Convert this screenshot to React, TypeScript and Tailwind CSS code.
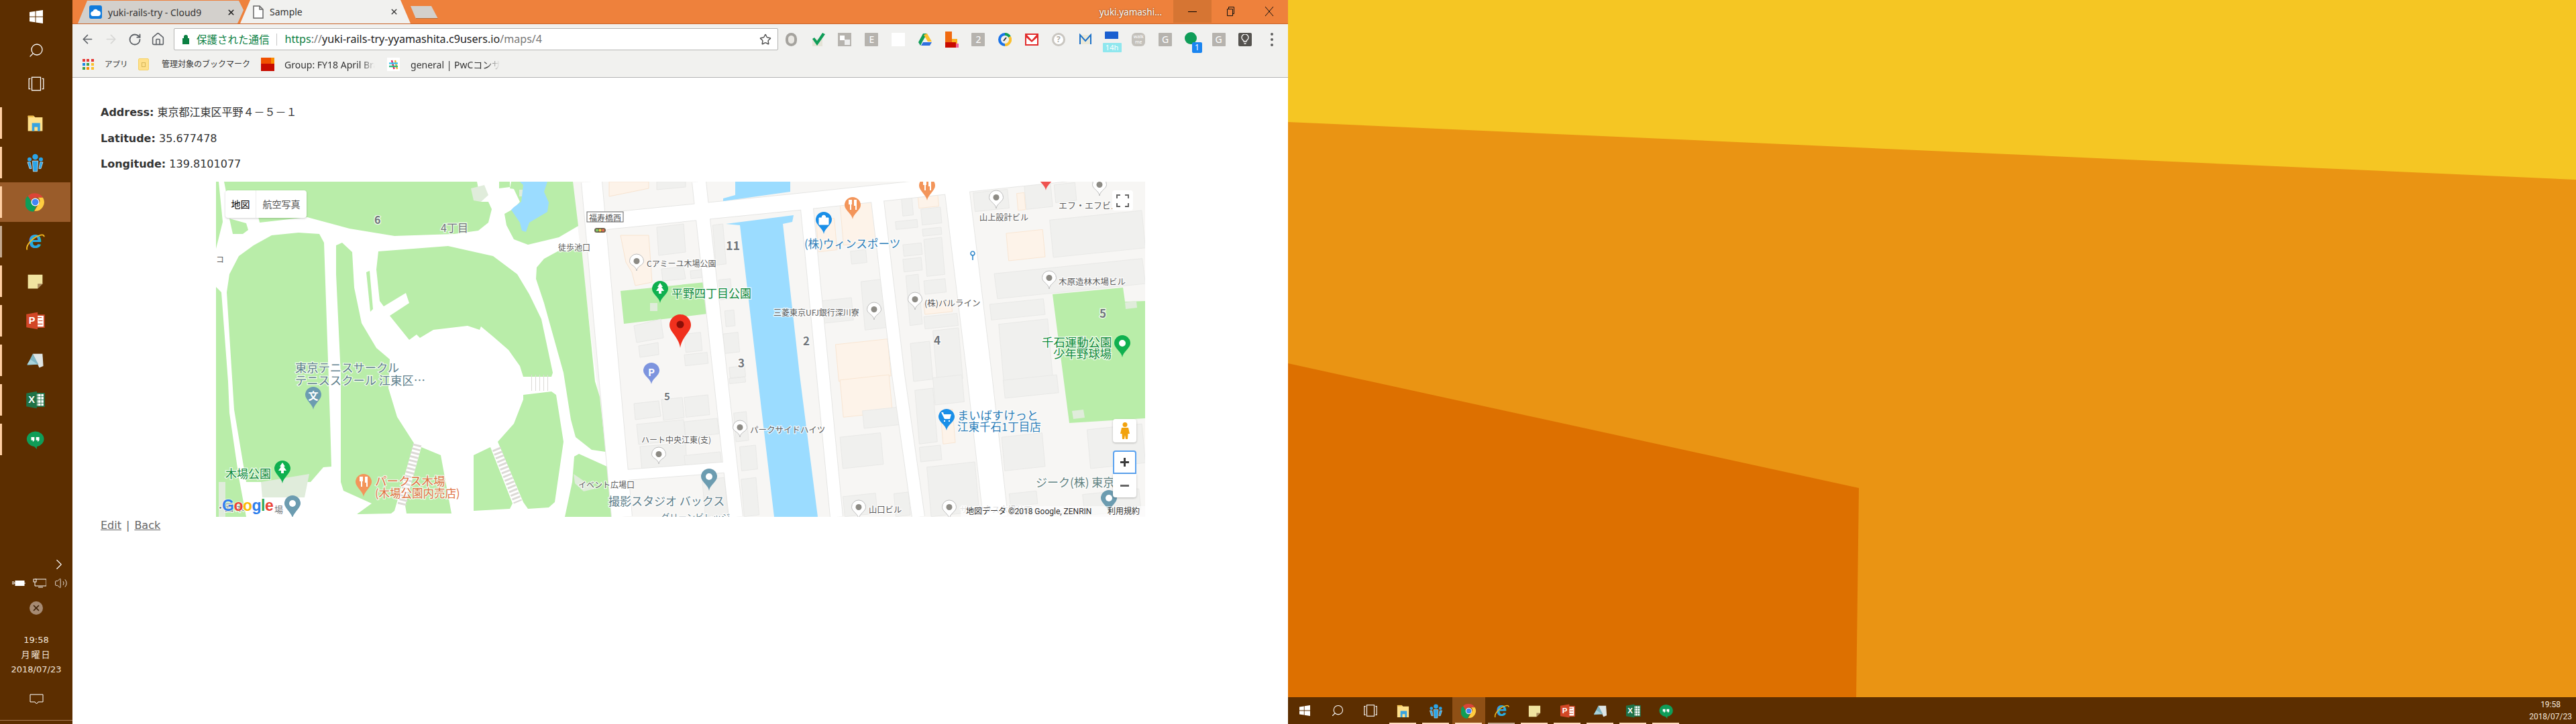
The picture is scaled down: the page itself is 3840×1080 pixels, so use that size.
import React from 'react';
import { ArrowLeft, ArrowRight, RotateCw, House, Star, X, Search, ChevronRight, Volume2 } from 'lucide-react';

// zoomed crop coordinates -> map coordinates
const zx = (x: number) => x / 2.24 + 698;
const zTop = (y: number) => y / 3 - 2;
const zBot = (y: number) => y / 3 + 288;

const GREEN = '#b9eda9';
const greens = [
  '5,0 389,0 395,30 406,30 411,41 406,61 391,73 355,78 266,81 199,70 136,53 65,61 62,48 20,40 12,0',
  '20,55 45,62 48,72 40,78 25,78',
  '0,0 4,0 10,60 0,100',
  '16,165 20,138 34,111 56,95 83,80 123,76 154,78 161,91 170,355 172,425 160,426 141,448 45,448 27,340',
  '0,157 8,165 18,298 20,345 34,441 45,500 0,500',
  '179,95 188,91 203,105 206,158 217,211 239,248 259,265 257,308 270,351 295,390 266,491 261,495 210,496 232,480 190,461 186,448 186,288 179,138',
  '242,104 346,96 413,111 449,138 467,168 485,205 502,285 500,291 458,291 453,275 436,251 413,231 395,216 393,221 375,215 324,221 304,233 299,228 288,236 259,200 288,181 283,166 250,186 244,178 239,131',
  '422,0 438,0 438,8 422,10',
  '440,0 532,0 540,66 511,83 465,94 444,86 433,65 430,48 444,40 453,30 444,11 438,10',
  '477,145 478,128 489,115 511,103 545,100 565,298 572,321 581,403 560,400 536,381 529,355 518,285 489,181',
  '458,318 500,313 507,318 518,388 505,478 496,486 465,488 458,478 420,388 444,361 458,325',
  '384,408 409,396 442,480 438,488 384,491',
  '306,396 335,408 351,495 284,495 282,483',
  '534,410 541,406 583,425 596,438 592,500 520,500 531,448',
  '224,135 229,133 234,190 230,194',
  '603,163 729,150 733,197 608,212',
  '1247,168 1352,158 1355,179 1385,178 1385,353 1272,360',
];
const paleGreen = ['67,448 139,436 132,471 69,471', '533,436 565,458 548,462 535,450', '647,181 658,181 658,193 647,193', '1355,180 1372,178 1373,188 1356,190', '1276,342 1293,340 1295,352 1278,354', '380,10 400,5 406,20 395,30 384,28', '452,12 462,12 462,22 452,22', '4,448 14,448 14,500 4,500'];
const water = ['453,0 494,0 489,15 496,31 494,45 467,61 462,75 456,73 453,61 440,42 444,38 455,30 458,5', '774,0 856,0 856,15 756,29 756,25 774,20', '760,63 861,50 859,60 845,63 870,288 897,500 832,500 807,288 781,65'];
const peach = ['586,0 645,0 645,10 586,22', '603,80 645,80 650,150 625,155 620,135 611,120'];

// building footprints, top half crop / bottom half crop
const blocksTop = [[965,40,1085,140],[1135,5,1230,130],[1235,10,1310,100],[1220,135,1540,345],[1035,350,1540,530],[1020,530,1205,625],[1050,620,1230,900],[725,75,765,160],[705,175,780,220],[790,120,860,200],[795,210,860,250],[730,280,795,340],[730,345,795,410],[800,255,870,430],[740,420,795,650],[800,440,875,510],[800,595,915,665],[755,720,830,900],[830,660,930,900],[455,525,565,640],[590,440,690,670],[555,310,610,375],[95,195,140,380],[115,440,160,535],[135,580,170,655],[130,680,185,775],[150,830,205,885],[20,400,60,440],[0,680,60,770],[0,770,80,830]];
const blocksBot = [[1065,0,1250,105],[1060,260,1205,430],[1345,220,1540,420],[1085,520,1180,590],[1330,510,1525,630],[770,60,845,310],[830,0,935,135],[785,315,860,390],[810,390,985,635],[595,145,720,240],[520,260,665,420],[530,530,645,635],[700,525,755,635],[150,10,205,40],[165,165,215,300],[185,315,245,430],[190,460,250,635],[0,90,85,190],[0,195,115,280],[0,345,125,420],[60,460,145,635]];
const blocksLeft = ['623,215 663,205 667,233 627,240', '630,245 659,240 660,258 632,262', '623,331 660,327 663,350 625,355', '664,325 695,322 698,352 667,356', '627,362 697,355 700,385 630,392', '657,0 700,0 700,8 657,12', '657,68 697,63 700,105 660,110', '664,130 697,127 700,145 666,148', '632,395 700,390 702,425 635,432'];
const peachBlocks = [[440,170,510,320,0],[520,90,640,290,0],[505,710,690,900,0],[780,60,850,125,0],[800,540,895,600,0],[1075,220,1205,360,0],[1110,55,1140,135,0],[520,0,695,190,1],[855,155,905,310,1]];

const roads: [string, number][] = [
  ['560,0 605,500', 30], ['578,60 590,58 868,30 1100,5 1385,-25', 24], ['720,0 727,65 775,500', 20], ['880,30 925,500', 18], ['985,20 1017,288 1047,500', 18], ['1104,8 1138,288 1162,500', 36], ['605,438 760,426', 15],
];

const labels: [string, number, number, number, string, number?][] = [
  ['6', 236, 56, 16, '#70757a', 700], ['4丁目', 335, 68, 16, '#70757a'], ['徒歩池口', 510, 97, 12, '#5b5b5b'], ['コ', 0, 115, 12, '#5b5b5b'],
  ['Cアミーユ木場公園', 642, 121, 12, '#5b5b5b'], ['平野四丁目公園', 679, 165, 17, '#0f8a3c'],
  ['東京テニスサークル', 118, 276, 17.3, '#5f7f8c'], ['テニススクール 江東区…', 118, 295, 17.3, '#5f7f8c'],
  ['木場公園', 14, 434, 17, '#0f8a3c'], ['パークス木場', 237, 445, 17.5, '#e0703f'], ['(木場公園内売店)', 237, 464, 16.5, '#e0703f'],
  ['イベント広場口', 540, 451, 12, '#5b5b5b'], ['撮影スタジオ バックス', 585, 475, 17, '#5f7f8c'], ['グリーンビレッジ', 663, 499, 13, '#5f7f8c'],
  ['ハート中央江東(支)', 634, 384, 12, '#5b5b5b'], ['5', 668, 319, 15, '#70757a', 700], ['11', 760, 94, 18, '#70757a', 700], ['2', 875, 236, 17, '#70757a', 700], ['3', 778, 269, 17, '#70757a', 700], ['4', 1070, 235, 17, '#70757a', 700], ['5', 1317, 195, 17, '#70757a', 700],
  ['(株)ウィンスポーツ', 877, 92, 16.6, '#2b7db8'], ['エフ・エフビル', 1256, 34, 13, '#5b5b5b'], ['山上設計ビル', 1138, 53, 12.2, '#5b5b5b'], ['木原造林木場ビル', 1256, 148, 12.5, '#5b5b5b'], ['(株)バルライン', 1056, 180, 12.5, '#5b5b5b'], ['三菱東京UFJ銀行深川寮', 831, 194, 12, '#5b5b5b'],
  ['千石運動公園', 1231, 238, 17.4, '#0f8a3c'], ['少年野球場', 1248, 255, 17.4, '#0f8a3c'], ['まいばすけっと', 1105, 347, 17.3, '#2b7db8'], ['江東千石1丁目店', 1105, 365, 16.5, '#2b7db8'],
  ['パークサイドハイツ', 796, 369, 12.5, '#5b5b5b'], ['山口ビル', 973, 489, 12.3, '#5b5b5b'], ['サンクタス木場公園', 1109, 488, 12, '#b5b5b5'], ['ジーク(株) 東京', 1222, 447, 17, '#5f8080'], ['場', 87, 488, 13, '#70757a'], ['・園 木', 0, 485, 13, '#70757a'],
];

type Glyph = 'dot' | 'tree' | 'fork' | 'bag' | 'cart' | 'P' | 'bun';
const pins: [number, number, number, number, string, Glyph][] = [
  [627, 108, 133, 21, 'gray', 'dot'], [662, 148, 181, 24, '#0fb04f', 'tree'], [649, 270, 302, 24, '#7d94de', 'P'], [660, 396, 421, 21, 'gray', 'dot'],
  [145, 306, 340, 24, '#6c9cb0', 'bun'], [99, 416, 450, 24, '#0fb04f', 'tree'], [114, 468, 502, 24, '#6c9cb0', 'dot'], [220, 436, 470, 24, '#f3955a', 'fork'],
  [735, 428, 461, 24, '#6c9cb0', 'dot'], [906, 45, 78, 24, '#1a8fe8', 'bag'], [949, 23, 56, 24, '#f3955a', 'fork'], [1060, -6, 28, 24, '#f3955a', 'fork'],
  [1163, 13, 40, 21, 'gray', 'dot'], [1237, -20, 13, 24, '#ef5350', 'dot'], [1317, -6, 21, 21, 'gray', 'dot'], [1242, 133, 160, 21, 'gray', 'dot'], [1042, 165, 191, 21, 'gray', 'dot'], [981, 180, 206, 21, 'gray', 'dot'],
  [1351, 229, 262, 24, '#0fb04f', 'dot'], [1089, 339, 371, 24, '#1a8fe8', 'cart'], [781, 356, 381, 21, 'gray', 'dot'], [958, 475, 503, 21, 'gray', 'dot'], [1093, 475, 503, 21, 'gray', 'dot'], [1331, 460, 493, 24, '#6c9cb0', 'dot'],
];

function Pin({ x, top, tip, w, color, glyph }: { x: number; top: number; tip: number; w: number; color: string; glyph: Glyph }) {
  const cy = top + w / 2;
  const gray = color === 'gray';
  const d = `M${x} ${tip}C${x - 1} ${tip - 8} ${x - w / 2} ${cy + w * 0.3} ${x - w / 2} ${cy}A${w / 2} ${w / 2} 0 1 1 ${x + w / 2} ${cy}C${x + w / 2} ${cy + w * 0.3} ${x + 1} ${tip - 8} ${x} ${tip}Z`;
  return (
    <g>
      <path d={d} fill={gray ? '#fff' : color} stroke={gray ? '#bdbdbd' : 'none'} strokeWidth="1" />
      {glyph === 'dot' && <circle cx={x} cy={cy} r={gray ? 4.5 : 5} fill={gray ? '#8d8b85' : '#fff'} />}
      {glyph === 'tree' && <path d={`M${x} ${cy - 9}l4 6h-2l4 6h-4v4h-4v-4h-4l4-6h-2z`} fill="#fff" />}
      {glyph === 'fork' && <path d={`M${x - 6} ${cy - 8}v7h2v8h2v-8h1v-7M${x + 2} ${cy - 8}h4v15h-2v-6h-2z`} fill="#fff" />}
      {glyph === 'bag' && <path d={`M${x - 7} ${cy - 3}h14v10h-14zM${x - 3} ${cy - 3}a3 4 0 0 1 6 0`} fill="#fff" stroke="#fff" />}
      {glyph === 'cart' && <path d={`M${x - 8} ${cy - 7}h3l1 3h11l-2 7h-8zM${x - 4} ${cy + 5}h2v2h-2zM${x + 3} ${cy + 5}h2v2h-2z`} fill="#fff" />}
      {glyph === 'P' && <text x={x} y={cy + 1} textAnchor="middle" dominantBaseline="central" fontSize="15" fontWeight="700" fill="#fff">P</text>}
      {glyph === 'bun' && <text x={x} y={cy} textAnchor="middle" dominantBaseline="central" fontSize="15" fontWeight="700" fill="#fff">文</text>}
    </g>
  );
}

function MapCanvas() {
  const bld = (x0: number, y0: number, x1: number, y1: number) => {
    const w = x1 - x0, h = y1 - y0;
    return `${x0},${y0 + 0.1 * w} ${x1 - 0.08 * h},${y0} ${x1},${y1 - 0.1 * w} ${x0 + 0.08 * h},${y1}`;
  };
  return (
    <svg viewBox="0 0 1385 500" className="block w-[1385px] h-[500px] font-['Noto_Sans_CJK_JP',sans-serif]">
      <rect width="1385" height="500" fill="#f7f6f4" />
      <polygon points="0,0 531,0 592,500 0,500" fill="#ffffff" />
      {greens.map((p) => <polygon key={p} points={p} fill={GREEN} />)}
      {paleGreen.map((p) => <polygon key={p} points={p} fill="#e0ecdb" />)}
      {peach.map((p) => <polygon key={p} points={p} fill="#fdf3e9" stroke="#f8e4d0" />)}
      {peachBlocks.map(([a, b, c, d, bottom]) => {
        const conv = bottom ? zBot : zTop;
        return <polygon key={`${a}-${b}`} points={bld(zx(a), conv(b), zx(c), conv(d))} fill="#fdf3e9" stroke="#f9e6d3" />;
      })}
      {blocksLeft.map((p) => <polygon key={p} points={p} fill="#f0f0ee" stroke="#e8e8e6" />)}
      {blocksTop.map(([a, b, c, d]) => <polygon key={`${a}-${b}`} points={bld(zx(a), zTop(b), zx(c), zTop(d))} fill="#f0f0ee" stroke="#e9e9e7" />)}
      {blocksBot.map(([a, b, c, d]) => <polygon key={`${a}-${b}`} points={bld(zx(a), zBot(b), zx(c), zBot(d))} fill="#f0f0ee" stroke="#e9e9e7" />)}
      {roads.map(([p, w]) => <polyline key={`c${p}`} points={p} fill="none" stroke="#e6e6e4" strokeWidth={w + 2} />)}
      {roads.map(([p, w]) => <polyline key={p} points={p} fill="none" stroke="#fff" strokeWidth={w} />)}
      {water.map((p) => <polygon key={p} points={p} fill="#9bdcff" />)}
      <line x1="300" y1="392" x2="277" y2="482" stroke="#dcdad6" strokeWidth="13" strokeDasharray="3 3" />
      <line x1="418" y1="398" x2="450" y2="478" stroke="#dcdad6" strokeWidth="13" strokeDasharray="3 3" />
      <line x1="470" y1="300" x2="498" y2="300" stroke="#dcdad6" strokeWidth="24" strokeDasharray="1 5" />
      <rect x="564" y="69" width="17" height="7" rx="3.5" fill="#6b5f4a" />
      <circle cx="568" cy="72.5" r="2" fill="#7ccf6b" /><circle cx="572.5" cy="72.5" r="2" fill="#f2d03f" /><circle cx="577" cy="72.5" r="2" fill="#e8694f" />
      <path d="M1128 104a3 3 0 1 1-.1 0M1128 110v7" fill="none" stroke="#2f86c9" strokeWidth="1.6" />
      {labels.map(([t, x, y, s, c, fw]) => (
        <text key={`${t}${x}`} x={x} y={y} fontSize={s} fill={c} fontWeight={fw ?? 400} dominantBaseline="central" stroke="#ffffff" strokeOpacity="0.8" strokeWidth="2.5" paintOrder="stroke">{t}</text>
      ))}
      <rect x="553" y="45" width="54" height="15" fill="#fff" stroke="#666" />
      <text x="556" y="53" fontSize="12" fill="#555" dominantBaseline="central" textLength="48">福寿橋西</text>
      {pins.map(([x, top, tip, w, color, glyph]) => <Pin key={`${x}-${top}`} x={x} top={top} tip={tip} w={w} color={color} glyph={glyph} />)}
      <path d="M692 248C690 232 676 224 676 214A16 16 0 1 1 708 214C708 224 694 232 692 248Z" fill="#f0301d" />
      <circle cx="692" cy="213" r="5.5" fill="#8a0f08" />
    </svg>
  );
}

function MapView() {
  return (
    <div className="relative w-[1385px] h-[500px] overflow-hidden ml-[172px] mt-[17px]">
      <MapCanvas />
      <div className="absolute left-[14px] top-[13px] flex h-[41px] bg-white rounded-sm shadow-[0_1px_3px_rgba(0,0,0,0.2)] text-[14px] font-['Noto_Sans_CJK_JP',sans-serif]">
        <div className="w-[46px] flex items-center justify-center text-black border-r border-[#eeeeee]">地図</div>
        <div className="w-[75px] flex items-center justify-center text-[#565656]">航空写真</div>
      </div>
      <div className="absolute left-[1336px] top-[13px] w-[31px] h-[30px] bg-white rounded-sm flex items-center justify-center">
        <svg width="19" height="19" viewBox="0 0 19 19" fill="none" stroke="#666" strokeWidth="2"><path d="M1 6V1h5M13 1h5v5M18 13v5h-5M6 18H1v-5" /></svg>
      </div>
      <div className="absolute left-[1337px] top-[354px] flex flex-col w-[35px]">
        <div className="h-[35px] bg-white rounded-sm shadow-[0_1px_3px_rgba(0,0,0,0.25)] flex items-center justify-center">
          <svg width="14" height="25" viewBox="0 0 14 25" fill="#f2a20c"><circle cx="7" cy="3.5" r="3.5" /><path d="M2 8h10l2 9h-2.5l-.5 8H8l-1-6-1 6H3l-.5-8H0z" /></svg>
        </div>
        <div className="mt-[12px] h-[35px] bg-white rounded-t-sm border-2 border-[#5aa2f0] flex items-center justify-center text-[#3c3c3c]">
          <svg width="13" height="13" viewBox="0 0 13 13" fill="currentColor"><path d="M5 0h3v5h5v3H8v5H5V8H0V5h5z" /></svg>
        </div>
        <div className="h-[35px] bg-white rounded-b-sm shadow-[0_1px_3px_rgba(0,0,0,0.25)] flex items-center justify-center">
          <div className="w-[13px] h-[3px] bg-[#666666]" />
        </div>
      </div>
      <div className="absolute right-0 bottom-0 w-[275px] h-[16px] pl-[8px] pr-[8px] bg-white/60 flex items-center justify-between text-[12px] text-[#333333] font-['Roboto','Noto_Sans_CJK_JP',sans-serif]">
        <span>地図データ ©2018 Google, ZENRIN</span>
        <span>利用規約</span>
      </div>
      <div className="absolute left-[9px] top-[469px] text-[23px] leading-[28px] font-bold tracking-[-0.5px] font-['Liberation_Sans',sans-serif] [text-shadow:0_0_2px_#fff,0_0_2px_#fff]">
        <span className="text-[#2f7fec]">G</span><span className="text-[#ea4335]">o</span><span className="text-[#fbbc05]">o</span><span className="text-[#2f7fec]">g</span><span className="text-[#34a853]">l</span><span className="text-[#ea4335]">e</span>
      </div>
    </div>
  );
}

function ChromeIcon({ size }: { size: number }) {
  return (
    <svg width={size} height={size} viewBox="0 0 24 24">
      <path d="M12 1a11 11 0 0 1 9.5 5.5H12A5.5 5.5 0 0 0 6.8 10L3 4.5A11 11 0 0 1 12 1z" fill="#db4437" />
      <path d="M3 4.5 7.5 12a5 5 0 0 0 6 5l-3.500 6.800A11 11 0 0 1 3 4.500z" fill="#0f9d58" />
      <path d="M21.500 6.500A11 11 0 0 1 11 23l5-8.500a5 5 0 0 0-.5-8z" fill="#ffcd40" />
      <circle cx="12" cy="12" r="5" fill="#fff" /><circle cx="12" cy="12" r="4" fill="#4285f4" />
    </svg>
  );
}

function AppIcon({ name, size }: { name: string; size: number }) {
  if (name === 'chrome') return <ChromeIcon size={size} />;
  return (
    <svg width={size} height={size} viewBox="0 0 24 24" className="font-['Liberation_Sans',sans-serif]">
      {name === 'explorer' && (<><path d="M3 3h7l2 2h9v17H3z" fill="#ffe08a" /><path d="M3 3h7v2H3z" fill="#f4c24d" /><path d="M8 12h10v10h-3v-5h-4v5H8z" fill="#38a3e0" /></>)}
      {name === 'contacts' && (<><circle cx="12" cy="5" r="3.500" fill="#2ba5e8" /><circle cx="5" cy="8" r="2.500" fill="#2ba5e8" /><circle cx="19" cy="8" r="2.500" fill="#2ba5e8" /><path d="M8.500 10h7l-1 13h-5zM2.500 11.500h3.500l1.500 8H5zM18 11.500h3.500L19 19.500h-2.500z" fill="#2ba5e8" stroke="#d7f0fb" strokeWidth=".6" /></>)}
      {name === 'ie' && (<><text x="12" y="20" textAnchor="middle" fontSize="30" fontWeight="700" fill="#29abe2">e</text><path d="M2 22C0 17 8 7 18 4c3-1 5 0 5 2" fill="none" stroke="#f4bb1e" strokeWidth="1.500" /></>)}
      {name === 'note' && (<><path d="M3 4h18v11l-6 6H3z" fill="#f1e4a0" /><path d="M21 15h-6v6z" fill="#a9895f" /></>)}
      {name === 'ppt' && (<><path d="M10 5h13v15H10z" fill="#fff" stroke="#d24726" strokeWidth="1.500" /><path d="M14 8h6M16 12h5M14 16h7" stroke="#d24726" /><path d="M1 4l14-2.500v21L1 20z" fill="#d24726" /><text x="8" y="16" textAnchor="middle" fontSize="12" fontWeight="700" fill="#fff">P</text></>)}
      {name === 'journal' && (<><path d="M9 4h12l1 15-5 2z" fill="#dfe5e4" /><path d="M9 4l7 13-14 1z" fill="#7fb6c4" /><path d="M6 11l9 6H2z" fill="#a9d3dc" /></>)}
      {name === 'excel' && (<><path d="M12 4h11v16H12z" fill="#fff" stroke="#1f7246" strokeWidth="1.500" /><path d="M15 4v16M19 4v16M12 8h11M12 12h11M12 16h11" stroke="#1f7246" strokeWidth=".7" /><path d="M1 4l13-2.500v21L1 20z" fill="#1f7246" /><text x="7.500" y="16" textAnchor="middle" fontSize="12" fontWeight="700" fill="#fff">X</text></>)}
      {name === 'hangouts' && (<><path d="M12 2a11 9.500 0 0 1 2 18.800V24l-3-3.100A11 9.500 0 0 1 12 2z" fill="#0f9d58" /><path d="M7 9h4v4l-2 2v-2H7zM13 9h4v4l-2 2v-2h-2z" fill="#fff" /></>)}
    </svg>
  );
}

const apps = ['explorer', 'contacts', 'chrome', 'ie', 'note', 'ppt', 'journal', 'excel', 'hangouts'];

function WinLogo({ size }: { size: number }) {
  return <svg width={size} height={size} viewBox="0 0 20 20" fill="#fff"><path d="M0 3l8.500-1.200V9.500H0zM9.500 1.600 20 0v9.500H9.500zM0 10.500h8.500v7.700L0 17zM9.500 10.500H20V20L9.500 18.400z" /></svg>;
}

function TaskView({ size }: { size: number }) {
  return <svg width={size} height={size} viewBox="0 0 24 24" fill="none" stroke="#fff" strokeWidth="1.200"><rect x="6" y="3" width="12" height="18" /><path d="M4 5H2v14h2M20 5h2v14h-2" /></svg>;
}

function Sidebar() {
  return (
    <aside className="w-[108px] h-[1080px] shrink-0 flex flex-col bg-[#5c2e00] text-[#f3e6da]">
      <div className="h-[50px] flex items-center justify-center"><WinLogo size={20} /></div>
      <div className="h-[50px] flex items-center justify-center"><Search size={24} strokeWidth={1.300} className="text-white -scale-x-100" /></div>
      <div className="h-[50px] flex items-center justify-center"><TaskView size={26} /></div>
      <div className="mt-[4px] flex flex-col">
        {apps.map((a) => (
          <div key={a} className={a === 'chrome' ? 'relative h-[59px] w-[105px] flex items-center justify-center bg-[#9a5c2a]' : 'relative h-[59px] w-[105px] flex items-center justify-center'}>
            <div className={a === 'ie' ? 'absolute left-0 top-[6px] h-[47px] w-[3px] bg-[#c4a98f]' : 'absolute left-0 top-[6px] h-[47px] w-[3px] bg-[#ffcfa3]'} />
            <AppIcon name={a} size={29} />
          </div>
        ))}
      </div>
      <div className="flex-1" />
      <div className="flex justify-end pr-[7px] h-[20px] items-center text-white"><ChevronRight size={26} strokeWidth={1} /></div>
      <div className="flex items-center h-[24px] mt-[6px] pl-[18px] gap-[11px] text-white">
        <svg width="20" height="10" viewBox="0 0 20 10" fill="none" stroke="#fff"><rect x="5" y="1.500" width="13" height="7" fill="#fff" /><path d="M0 3h3v3H0zM4 5h1M19 4v2" /></svg>
        <svg width="20" height="14" viewBox="0 0 20 14" fill="none" stroke="#fff"><path d="M3 1h17v10H3zM8 13h7" /><rect x="1" y="1" width="4" height="4" fill="#5c2e00" /></svg>
        <Volume2 size={20} strokeWidth={1} className="ml-[1px]" />
      </div>
      <div className="mt-[15px] flex justify-center">
        <div className="w-[20px] h-[20px] rounded-full bg-[#a68a72] flex items-center justify-center"><X size={14} strokeWidth={3} className="text-[#3f2208]" /></div>
      </div>
      <div className="mt-[27px] flex flex-col items-center text-[13px] leading-[22px] font-['DejaVu_Sans','Noto_Sans_CJK_JP',sans-serif]">
        <span>19:58</span>
        <span className="tracking-[2px]">月曜日</span>
        <span>2018/07/23</span>
      </div>
      <div className="mt-[25px] h-[39px] flex justify-center">
        <svg width="21" height="16" viewBox="0 0 21 16" fill="none" stroke="#fff"><path d="M1 1h19v11h-7l-2.500 3L8 12H1z" /></svg>
      </div>
      <div className="h-[1px] w-[108px] bg-[#a87a55]" />
      <div className="h-[5px]" />
    </aside>
  );
}

function GrayExt({ label }: { label: string }) {
  return <div className="w-[20px] h-[20px] bg-[#b6b3ae] flex items-center justify-center text-white text-[14px] rounded-[1px]">{label}</div>;
}

function Extensions() {
  const cell = 'relative w-[39.8px] h-[33px] flex items-center justify-center';
  return (
    <div className="flex">
      <div className={cell}><div className="w-[17px] h-[20px] rounded-full border-[4px] border-[#a5a39e] bg-[#e9e7e2]" /></div>
      <div className={cell}><svg width="22" height="22" viewBox="0 0 22 22"><rect x="2" y="10" width="15" height="11" fill="#e5e3d7" /><path d="M2 10l3-2 4 5L17 1l4 2L9 20z" fill="#0f9d58" /></svg></div>
      <div className={cell}><div className="w-[20px] h-[20px] bg-[#b6b3ae] relative"><div className="absolute left-[3px] top-[4px] w-[7px] h-[7px] bg-white" /><div className="absolute left-[10px] top-[10px] w-[8px] h-[8px] bg-[#eeeeee]" /></div></div>
      <div className={cell}><GrayExt label="E" /></div>
      <div className={cell}><div className="w-[20px] h-[20px] bg-white" /></div>
      <div className={cell}><svg width="20" height="20" viewBox="0 0 20 20"><path d="M7 1h6L6 13l-3 6-3-5z" fill="#0f9d58" /><path d="M13 1l7 12h-6L8 3z" fill="#fbc02d" /><path d="M4 19l3-5h13l-3 5z" fill="#2f6fde" /></svg></div>
      <div className={cell}><svg width="20" height="24" viewBox="0 0 20 24"><rect x="0" y="0" width="10" height="24" fill="#f06a10" /><rect x="10" y="11" width="8" height="13" fill="#fbb122" /><rect x="0" y="16" width="16" height="8" fill="#c80b00" /><rect x="16" y="18" width="4" height="6" fill="#f5639a" /></svg></div>
      <div className={cell}><GrayExt label="2" /></div>
      <div className={cell}><svg width="20" height="20" viewBox="0 0 20 20" fill="none" strokeWidth="4"><path d="M10 2a8 8 0 0 1 7 4" stroke="#0f9d58" /><path d="M17 6a8 8 0 0 1-7 12" stroke="#fbc02d" /><path d="M10 18A8 8 0 0 1 10 2" stroke="#1a73e8" /><path d="M8 12l4-5" stroke="#333" strokeWidth="2" /></svg></div>
      <div className={cell}><svg width="20" height="20" viewBox="0 0 20 20"><rect x="1" y="2" width="18" height="16" fill="#fff" stroke="#e12b2b" strokeWidth="2" /><path d="M2 2l8 9 8-9v5l-8 7-8-7z" fill="#e12b2b" /></svg></div>
      <div className={cell}><div className="w-[20px] h-[20px] rounded-full border-[3px] border-[#c9c6c0] bg-white flex items-center justify-center text-[12px] text-[#b0aea8] font-bold">?</div></div>
      <div className={cell}><svg width="20" height="18" viewBox="0 0 20 18"><rect x="1" y="2" width="18" height="14" fill="#ece9d8" /><path d="M2 16V2l8 9 8-9v14" fill="none" stroke="#1f73c9" strokeWidth="2" /></svg></div>
      <div className={cell}>
        <div className="w-[20px] h-[11px] bg-[#1a5fd0] -mt-[13px] rounded-t-[1px]" />
        <div className="absolute left-[6px] top-[22px] w-[28px] h-[14px] bg-[#8fe7ee] text-white text-[11px] leading-[14px] text-center rounded-[1px]">14h</div>
      </div>
      <div className={cell}><div className="w-[20px] h-[20px] rounded-[6px] bg-[#c4c1bb] text-white text-[7px] leading-[8px] text-center pt-[2px]">walk me</div></div>
      <div className={cell}><GrayExt label="G" /></div>
      <div className={cell}>
        <div className="w-[18px] h-[18px] rounded-full bg-[#0f9d58] -mt-[4px] -ml-[3px]" />
        <div className="absolute left-[20px] top-[21px] w-[15px] h-[16px] bg-[#1a85f0] rounded-[2px] text-white text-[12px] leading-[16px] text-center">1</div>
      </div>
      <div className={cell}><GrayExt label="G" /></div>
      <div className={cell}><div className="w-[20px] h-[20px] bg-[#55534f] rounded-[2px] flex items-center justify-center"><svg width="12" height="15" viewBox="0 0 12 15" fill="none" stroke="#fff" strokeWidth="1.300"><path d="M4 11v-1.500a5 5 0 1 1 4 0V11zM4.500 14h3" /></svg></div></div>
      <div className={cell}><div className="flex flex-col gap-[4px]"><div className="w-[4px] h-[4px] rounded-full bg-[#5f5f5f]" /><div className="w-[4px] h-[4px] rounded-full bg-[#5f5f5f]" /><div className="w-[4px] h-[4px] rounded-full bg-[#5f5f5f]" /></div></div>
    </div>
  );
}

function AppsGrid() {
  const colors = ['#e53935', '#e53935', '#e53935', '#1e88e5', '#43a047', '#fbc02d', '#43a047', '#fb8c00', '#fbc02d'];
  return (
    <div className="grid grid-cols-3 gap-[2px] w-[17px]">
      {colors.map((c, i) => <svg key={i} width="4" height="4" className="block"><rect width="4" height="4" fill={c} /></svg>)}
    </div>
  );
}

function TabStrip() {
  return (
    <div className="h-[36px] flex items-end pl-[8px] bg-[#ee813c] border-b border-[#c9652b] relative">
      <div className="w-[247px] h-[34px] flex items-center pl-[17px] pr-[12px] bg-[#d3d0cc] [clip-path:polygon(14px_0,240px_0,247px_14px,238px_100%,0_100%)]">
        <div className="w-[19px] h-[20px] rounded-[3px] bg-[#0f7bdc] flex items-center justify-center shrink-0">
          <svg width="15" height="11" viewBox="0 0 15 11" fill="#fff"><path d="M4 11a3.500 3.500 0 0 1-.5-7 4 4 0 0 1 7.500-1 3.800 3.800 0 0 1 0 8z" /></svg>
        </div>
        <span className="ml-[9px] text-[14px] text-[#333333] w-[170px] whitespace-nowrap">yuki-rails-try - Cloud9</span>
        <X size={13} strokeWidth={3} className="ml-[7px] text-[#222222]" />
      </div>
      <div className="-ml-[5px] w-[254px] h-[35px] flex items-center pl-[19px] pr-[18px] bg-[#f1f1ef] [clip-path:polygon(15px_0,239px_0,254px_100%,0_100%)]">
        <svg width="16" height="20" viewBox="0 0 16 20" fill="#fff" stroke="#666" strokeWidth="1.500" className="shrink-0"><path d="M1 1h9l5 5v13H1zM10 1v5h5" /></svg>
        <span className="ml-[9px] flex-1 text-[14px] text-[#333333]">Sample</span>
        <X size={13} strokeWidth={2.500} className="text-[#333333]" />
      </div>
      <div className="self-start mt-[9px] ml-[0px] w-[41px] h-[19px] bg-[#d3d0cc] border-b border-[#b86a35] [clip-path:polygon(0_0,31px_0,41px_100%,8px_100%)]" />
      <div className="flex-1 self-stretch flex justify-end items-start">
        <span className="mt-[9px] mr-[17px] text-[13.500px] leading-[18px] text-white [text-shadow:0_0_2px_#5a3310]">yuki.yamashi...</span>
        <div className="w-[57px] h-[34px] bg-[#d67533] flex items-center justify-center text-[#111111]"><div className="w-[13px] h-[1px] bg-black" /></div>
        <div className="w-[57px] h-[34px] flex items-center justify-center">
          <svg width="13" height="14" viewBox="0 0 13 14" fill="none" stroke="#111"><path d="M1.500 3.500h8v10h-8zM3.500 3.500V.5h8v10h-2" /></svg>
        </div>
        <div className="w-[57px] h-[34px] flex items-center justify-center">
          <svg width="14" height="14" viewBox="0 0 14 14" stroke="#111" strokeWidth="1"><path d="M1 0l12 14M13 0L1 14" /></svg>
        </div>
      </div>
    </div>
  );
}

function Toolbar() {
  return (
    <div className="h-[41px] bg-[#f1f1ef] flex items-start pt-[6px] pl-[5px]">
      <div className="w-[35px] h-[33px] flex items-center justify-center text-[#5f6368]"><ArrowLeft size={21} strokeWidth={1.800} /></div>
      <div className="w-[35px] h-[33px] flex items-center justify-center text-[#d6d6d4]"><ArrowRight size={21} strokeWidth={1.800} /></div>
      <div className="w-[35px] h-[33px] flex items-center justify-center text-[#5f6368]"><RotateCw size={20} strokeWidth={2.200} /></div>
      <div className="w-[35px] h-[33px] flex items-center justify-center text-[#5f6368]"><House size={21} strokeWidth={1.800} /></div>
      <div className="ml-[6px] w-[901px] h-[33px] flex items-center bg-white border border-[#b4b4b2] rounded-[2px] pl-[11px] pr-[9px] text-[15.500px]">
        <svg width="12" height="15" viewBox="0 0 12 15" className="shrink-0"><path d="M3 6V4a3 3 0 0 1 6 0v2h2v9H1V6z" fill="#0b8043" /></svg>
        <span className="ml-[10px] text-[#0b8043] font-['Noto_Sans_CJK_JP',sans-serif]">保護された通信</span>
        <div className="ml-[10px] w-[1px] h-[18px] bg-[#c8c8c8]" />
        <span className="ml-[12px] text-[16.100px] text-[#777777] whitespace-nowrap font-['Noto_Sans',sans-serif]">
          <span className="text-[#0b8043]">https</span>://<span className="text-[#222222]">yuki-rails-try-yyamashita.c9users.io</span>/maps/4
        </span>
        <Star size={18} strokeWidth={2} className="ml-auto text-[#555555]" />
      </div>
      <Extensions />
    </div>
  );
}

function BookmarkBar() {
  return (
    <div className="h-[39px] bg-[#f1f1ef] border-b border-[#b5b5b5] flex items-center pl-[15px] text-[12px] text-[#333333] font-['Noto_Sans','Noto_Sans_CJK_JP',sans-serif]">
      <AppsGrid />
      <span className="ml-[16px] w-[50px] text-[11.500px]">アプリ</span>
      <div className="w-[16px] h-[18px] rounded-[2px] bg-[#ffe08a] border border-[#f4d26a] flex items-center justify-center"><div className="w-[6px] h-[7px] border border-[#d5b659]" /></div>
      <span className="ml-[19px] whitespace-nowrap">管理対象のブックマーク</span>
      <div className="ml-[16px] w-[20px] h-[20px] bg-[#c70c00] relative"><div className="absolute left-0 top-0 w-[20px] h-[9px] bg-[#f05000]" /><div className="absolute right-0 top-0 w-[5px] h-[9px] bg-[#fb8c00]" /></div>
      <span className="ml-[15px] w-[135px] overflow-hidden whitespace-nowrap text-[14px] [mask-image:linear-gradient(to_right,black_85%,transparent)]">Group: FY18 April Branch</span>
      <div className="ml-[18px] w-[19px] h-[20px] bg-white flex items-center justify-center">
        <svg width="15" height="15" viewBox="0 0 15 15" strokeWidth="2.400"><path d="M5 1l3.500 13" stroke="#e01e5a" /><path d="M10 1l3 13" stroke="#ecb22e" /><path d="M1 5.500h13" stroke="#36c5f0" /><path d="M1 10h13" stroke="#2eb67d" /></svg>
      </div>
      <span className="ml-[16px] w-[133px] overflow-hidden whitespace-nowrap text-[14px] [mask-image:linear-gradient(to_right,black_85%,transparent)]">general | PwCコンサルティング</span>
    </div>
  );
}

function Field({ label, value }: { label: string; value: string }) {
  return (
    <p className="h-[19px] leading-[19px] text-[16px] text-[#333333]">
      <strong className="font-bold">{label}</strong> {value}
    </p>
  );
}

function Browser() {
  return (
    <div className="flex-1 flex flex-col bg-white">
      <TabStrip />
      <Toolbar />
      <BookmarkBar />
      <main className="pl-[42px] pt-[42px] font-['DejaVu_Sans','Noto_Sans_CJK_JP',sans-serif]">
        <div className="flex flex-col gap-[19.500px]">
          <Field label="Address:" value="東京都江東区平野４－５－１" />
          <Field label="Latitude:" value="35.677478" />
          <Field label="Longitude:" value="139.8101077" />
        </div>
        <MapView />
        <div className="mt-[3px] text-[16px] leading-[19px] text-[#666666]">
          <a className="underline">Edit</a><span className="mx-[7px]">|</span><a className="underline">Back</a>
        </div>
      </main>
    </div>
  );
}

function Taskbar() {
  return (
    <div className="h-[40px] bg-[#5c2e00] flex items-center text-[#f3e6da]">
      <div className="w-[49px] flex justify-center"><WinLogo size={16} /></div>
      <div className="w-[49px] flex justify-center"><Search size={20} strokeWidth={1.300} className="text-white -scale-x-100" /></div>
      <div className="w-[49px] flex justify-center"><TaskView size={22} /></div>
      {apps.map((a) => (
        <div key={a} className={a === 'chrome' ? 'relative w-[49px] h-[40px] flex items-center justify-center bg-[#8f5015]' : 'relative w-[49px] h-[40px] flex items-center justify-center'}>
          <AppIcon name={a} size={23} />
          <div className={a === 'ie' ? 'absolute bottom-0 left-[4px] w-[40px] h-[2px] bg-[#c4a98f]' : 'absolute bottom-0 left-[4px] w-[40px] h-[2px] bg-[#ffdcbc]'} />
        </div>
      ))}
      <div className="ml-auto mr-[6px] flex flex-col items-center text-[12px] leading-[18px] font-['Roboto',sans-serif]">
        <span>19:58</span>
        <span>2018/07/23</span>
      </div>
    </div>
  );
}

export default function App() {
  return (
    <div className="w-[3840px] h-[1080px] flex overflow-hidden font-['Noto_Sans','Noto_Sans_CJK_JP',sans-serif]">
      <div className="w-[1920px] flex">
        <Sidebar />
        <Browser />
      </div>
      <div className="w-[1920px] flex flex-col">
        <svg viewBox="0 0 1920 1040" className="block w-[1920px] h-[1040px]">
          <rect width="1920" height="1040" fill="#ea9413" />
          <polygon points="0,0 1920,0 1920,268 0,182" fill="#f5c623" />
          <polygon points="0,542 851,728 847,1040 0,1040" fill="#dd7000" />
        </svg>
        <Taskbar />
      </div>
    </div>
  );
}
